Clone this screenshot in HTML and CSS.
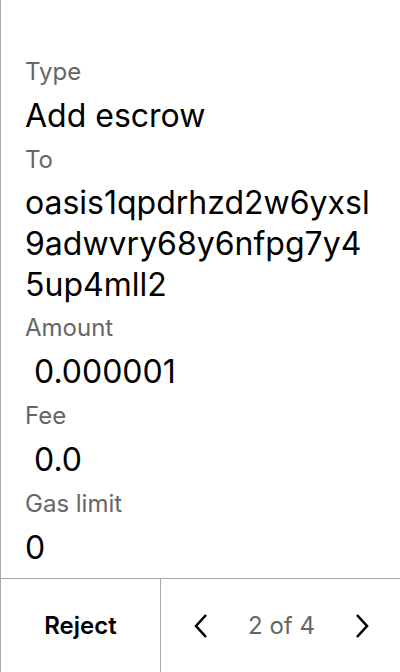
FILE: index.html
```html
<!DOCTYPE html>
<html>
<head>
<meta charset="utf-8">
<link rel="stylesheet" href="styles.css">
</head>
<body>
<div class="screen">
  <div class="content">
    <div class="label">Type</div>
    <div class="value">Add escrow</div>
    <div class="label">To</div>
    <div class="value addr">oasis1qpdrhzd2w6yxsl9adwvry68y6nfpg7y45up4mll2</div>
    <div class="label">Amount</div>
    <div class="value">&nbsp;0.000001</div>
    <div class="label">Fee</div>
    <div class="value">&nbsp;0.0</div>
    <div class="label">Gas limit</div>
    <div class="value">0</div>
  </div>
  <div class="footer">
    <div class="reject">Reject</div>
    <div class="pager">
      <svg class="chev" width="20" height="28" viewBox="0 0 20 28"><path d="M15 3 L5 14 L15 25" fill="none" stroke="#000" stroke-width="2.6"/></svg>
      <span class="count">2 of 4</span>
      <svg class="chev" width="20" height="28" viewBox="0 0 20 28"><path d="M5 3 L15 14 L5 25" fill="none" stroke="#000" stroke-width="2.6"/></svg>
    </div>
  </div>
</div>
</body>
</html>
```
FILE: styles.css
```css
html, body {
  margin: 0;
  padding: 0;
  background: #fff;
}
.screen {
  width: 400px;
  height: 672px;
  box-sizing: border-box;
  border-left: 1px solid #a8a8a8;
  display: flex;
  flex-direction: column;
  font-family: Inter, "Noto Sans", sans-serif;
  color: #000;
}
.content {
  flex: 1;
  padding: 49px 0 0 24px;
}
.label {
  font-size: 24px;
  line-height: 45px;
  color: #666;
}
.value {
  font-size: 32px;
  line-height: 43px;
  word-break: break-all;
  width: 352px;
}
.addr {
  line-height: 41px;
}
.footer {
  height: 93px;
  border-top: 1px solid #a8a8a8;
  display: flex;
}
.reject {
  width: 159px;
  border-right: 1px solid #a8a8a8;
  display: flex;
  align-items: center;
  justify-content: center;
  font-weight: 600;
  font-size: 24px;
}
.pager {
  flex: 1;
  display: flex;
  align-items: center;
  justify-content: space-between;
  padding: 0 28px 0 30px;
}
.count {
  font-size: 24px;
  color: #666;
}
```
